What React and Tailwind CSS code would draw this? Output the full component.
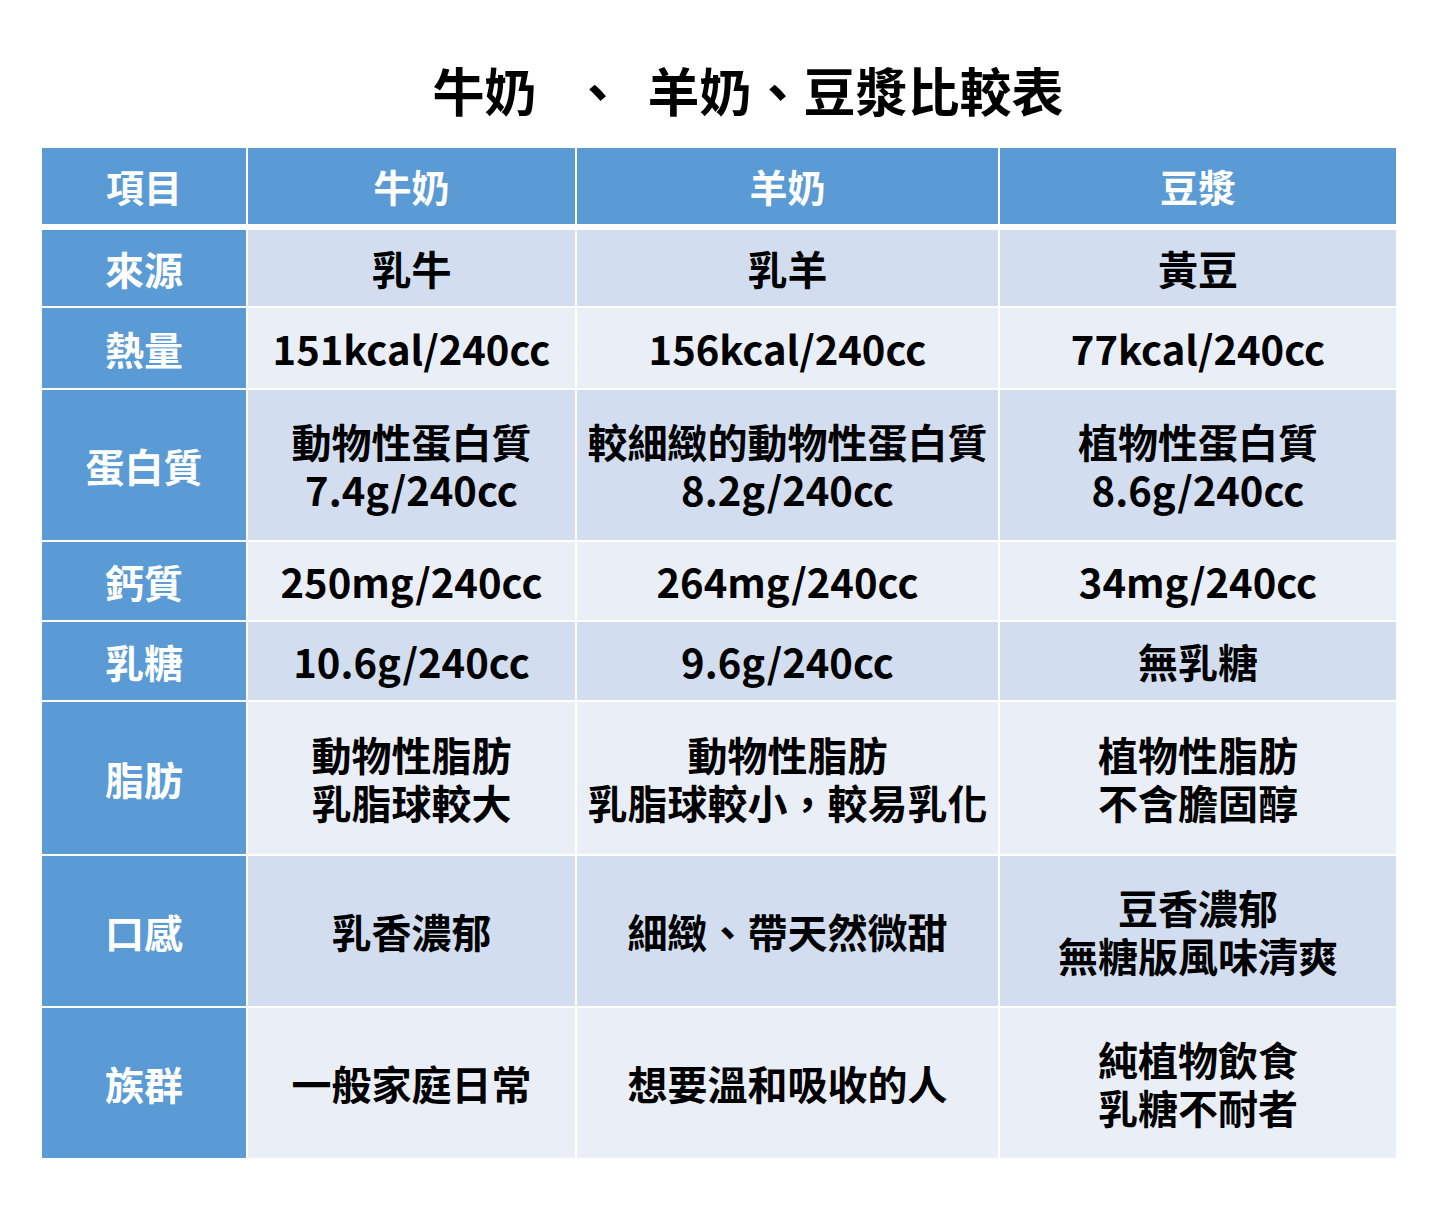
import React from "react";

const rows = [
  { label: "來源", h: "h-[76px]", dark: true, cells: [["乳牛"], ["乳羊"], ["黃豆"]] },
  { label: "熱量", h: "h-[80px]", dark: false, cells: [["151kcal/240cc"], ["156kcal/240cc"], ["77kcal/240cc"]] },
  { label: "蛋白質", h: "h-[150px]", dark: true, cells: [["動物性蛋白質", "7.4g/240cc"], ["較細緻的動物性蛋白質", "8.2g/240cc"], ["植物性蛋白質", "8.6g/240cc"]] },
  { label: "鈣質", h: "h-[78px]", dark: false, cells: [["250mg/240cc"], ["264mg/240cc"], ["34mg/240cc"]] },
  { label: "乳糖", h: "h-[78px]", dark: true, cells: [["10.6g/240cc"], ["9.6g/240cc"], ["無乳糖"]] },
  { label: "脂肪", h: "h-[152px]", dark: false, cells: [["動物性脂肪", "乳脂球較大"], ["動物性脂肪", "乳脂球較小，較易乳化"], ["植物性脂肪", "不含膽固醇"]] },
  { label: "口感", h: "h-[150px]", dark: true, cells: [["乳香濃郁"], ["細緻、帶天然微甜"], ["豆香濃郁", "無糖版風味清爽"]] },
  { label: "族群", h: "h-[150px]", dark: false, cells: [["一般家庭日常"], ["想要溫和吸收的人"], ["純植物飲食", "乳糖不耐者"]] },
];

const font = { fontFamily: '"Noto Sans CJK TC", "Noto Sans", sans-serif' };

export default function App() {
  return (
    <div className="w-[1440px] h-[1206px] bg-white" style={font}>
      <div className="pt-[62px] pb-[30px] pl-[56px] flex justify-center">
        <h1 className="text-[52px] leading-[56px] font-bold text-black">
          牛奶<span className="ml-[35px] mr-[24px]">、</span>羊奶、豆漿比較表
        </h1>
      </div>
      <div className="ml-[42px] w-[1354px]">
        <div className="grid grid-cols-[204px_327px_421px_396px] gap-x-[2px] mb-[6px] h-[76px]">
          {["項目", "牛奶", "羊奶", "豆漿"].map((t) => (
            <div key={t} className="bg-[#5b9bd5] flex items-center justify-center text-white font-bold text-[38px] leading-[48px]">
              {t}
            </div>
          ))}
        </div>
        <div className="flex flex-col gap-y-[2px]">
          {rows.map((r) => (
            <div key={r.label} className={`grid grid-cols-[204px_327px_421px_396px] gap-x-[2px] ${r.h}`}>
              <div className="bg-[#5b9bd5] flex items-center justify-center text-white font-bold text-[39px] leading-[48px]">
                {r.label}
              </div>
              {r.cells.map((lines, i) => (
                <div
                  key={i}
                  className={`${r.dark ? "bg-[#d2deef]" : "bg-[#eaeff7]"} flex flex-col items-center justify-center text-black font-bold text-[40px] leading-[48px]`}
                >
                  {lines.map((l, j) => (
                    <div key={j} className="whitespace-nowrap">{l}</div>
                  ))}
                </div>
              ))}
            </div>
          ))}
        </div>
      </div>
    </div>
  );
}
